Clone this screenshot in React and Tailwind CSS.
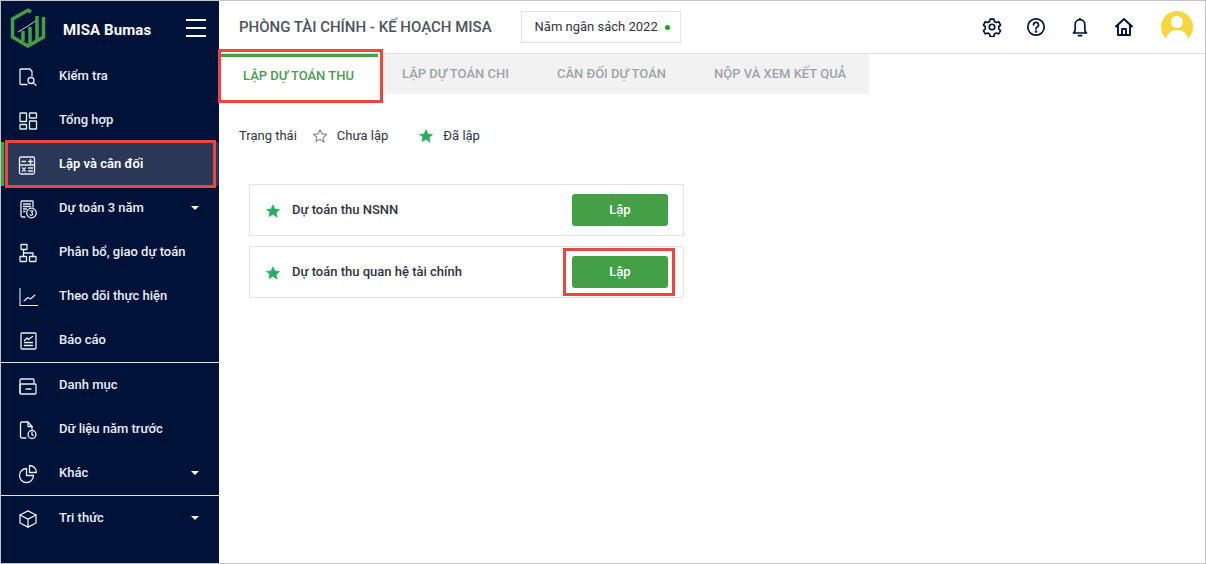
import React from "react";

const S = { fill: "none", stroke: "currentColor", strokeWidth: 1.3, strokeLinecap: "round", strokeLinejoin: "round" };
const Ic = ({ children, size = 20 }) => (
  <svg width={size} height={size} viewBox="0 0 20 20" {...S}>{children}</svg>
);

const icons = {
  check: <Ic><path d="M9 17.500H2.800A.8.8 0 0 1 2 16.700V2.800A.8.8 0 0 1 2.800 2H12l2 2.500V9" /><circle cx="13" cy="13.500" r="3" /><path d="M15.300 15.800l2.700 2.400" /></Ic>,
  grid: <Ic><rect x="2" y="2" width="6.500" height="8.500" rx=".6" /><rect x="11.500" y="2" width="7" height="5" rx=".6" /><rect x="2" y="13.500" width="6.500" height="4.500" rx=".6" /><rect x="11.500" y="10" width="7" height="8" rx=".6" /></Ic>,
  calc: <Ic><rect x="1.500" y="2" width="15" height="17" rx="1.500" /><path d="M1.500 10h15M4 6.500h3.500M10.500 6.500h4M12.500 4.500v4M4.500 12.800l2.800 3.400M7.300 12.800l-2.800 3.400M10.500 13h4M10.500 16h4" /></Ic>,
  three: <Ic><path d="M7 18H4.500A1.500 1.500 0 0 1 3 16.500V2.800A.8.8 0 0 1 3.800 2h10.400a.8.8 0 0 1 .8.8V8" /><path d="M5.500 5h7M5.500 7.500h7M5.500 10h3M5.500 12.500h1.500" strokeWidth="1.300" /><circle cx="13.500" cy="14" r="4.800" /><path d="M12 11.800h3l-1.500 1.800a1.400 1.400 0 1 1-1.500 2" strokeWidth="1.100" /></Ic>,
  tree: <Ic><rect x="3" y="1.500" width="6" height="5" rx=".5" /><rect x="2" y="13.500" width="6.500" height="5" rx=".5" /><rect x="11.500" y="13.500" width="6.500" height="5" rx=".5" /><path d="M5.500 6.500v7M5.500 10H15v3.500" /></Ic>,
  line: <Ic size={20}><path d="M2 1.500V18.500H19.500" strokeWidth="1.100" /><path d="M6 14l4-3.500 2.500 1.500 4.500-4" strokeWidth="1.100" /></Ic>,
  report: <Ic><rect x="3" y="2" width="15" height="16" rx="1" /><path d="M6.500 9.500l2.500-2.500 1.500 1.500L14.500 5.500M6.500 11.500h8M6.500 14.500h8" /></Ic>,
  folder: <Ic><path d="M2 17V4a1 1 0 0 1 1-1h12a1 1 0 0 1 1 1v3" /><path d="M2 9a1 1 0 0 1 1-1h14a1 1 0 0 1 1 1v8a1 1 0 0 1-1 1H3a1 1 0 0 1-1-1z" /><path d="M8 13h5" /></Ic>,
  hist: <Ic><path d="M8 18H4a1.500 1.500 0 0 1-1.500-1.500v-13A1.500 1.500 0 0 1 4 2h6l4 4.500V9" /><path d="M10 2v4.500h4" /><circle cx="14" cy="14.500" r="4" /><path d="M14 12.500v2.200l1.500.8" /></Ic>,
  pie: <Ic><path d="M8.500 4.500a7 7 0 1 0 7 7h-7z" /><path d="M11.500 1.500a7 7 0 0 1 7 7h-7z" /></Ic>,
  box: <Ic><path d="M10 1.800l8 4.200v8l-8 4.200L2 14V6z" /><path d="M2 6l8 4.200L18 6M10 10.200v8" /></Ic>,
};

const Row = ({ icon, label, caret, active }) => (
  <div className={`relative h-11 flex items-center text-[13px] font-medium text-[#e8edf5] ${active ? "bg-[#2b3756]" : ""}`}>
    {active && <div className="absolute left-0 top-0 h-full w-[3px] bg-[#43a047]" />}
    <div className="w-[58px] pl-[17px] pt-[2px] flex items-center">{icons[icon]}</div>
    <span className={active ? "font-semibold text-white" : ""}>{label}</span>
    {caret && <div className="ml-auto mr-[20px] w-0 h-0 border-x-[4px] border-x-transparent border-t-[4px] border-t-white" />}
  </div>
);

const Star = ({ on, className = "" }) => (
  <svg width="16" height="16" viewBox="0 0 24 24" className={className}>
    <path
      d="M12 2.500l2.900 6.400 7 .8-5.200 4.700 1.400 6.900L12 17l-6.100 3.300 1.400-6.900L2.100 9.700l7-.8z"
      fill={on ? "#27ae60" : "none"}
      stroke={on ? "#27ae60" : "#8a8f96"}
      strokeWidth={on ? 1 : 1.800}
      strokeLinejoin="round"
    />
  </svg>
);

const Card = ({ label }) => (
  <div className="h-[52px] border border-[#e2e2e2] flex items-center pl-[15px] pr-[15px] text-[13px] font-medium text-[#30343c]">
    <Star on className="mr-[11px] mt-[2px]" />
    <span>{label}</span>
    <button className="ml-auto w-[96px] h-8 rounded-[3px] bg-[#43a047] text-white text-[13px] font-medium">Lập</button>
  </div>
);

export default function App() {
  return (
    <div className="relative w-[1206px] h-[564px] border border-[#c4c4c4] flex bg-white overflow-hidden font-['Roboto',sans-serif]">
      <aside className="w-[218px] shrink-0 bg-[#001238] flex flex-col">
        <div className="h-[53px] flex items-center pl-[9px] pr-[13px]">
          <svg width="36" height="40" viewBox="0 0 36 40" fill="none">
            <path d="M21 4L18 2.200 2.500 11v18L18 38l15.500-9V9" stroke="#43a047" strokeWidth="3.500" strokeLinejoin="miter" />
            <path d="M8 24l10-6 9-6" stroke="#c9d6c9" strokeWidth="1" />
            <path d="M13 33v-10M20 36V19M27 33V8" stroke="#43a047" strokeWidth="3.500" />
          </svg>
          <span className="ml-[17px] mt-[5px] text-[15px] tracking-[0.1px] font-bold text-white">MISA Bumas</span>
          <div className="ml-auto flex flex-col gap-[6px]">
            <div className="w-5 h-[2px] bg-white" />
            <div className="w-5 h-[2px] bg-white" />
            <div className="w-5 h-[2px] bg-white" />
          </div>
        </div>
        <Row icon="check" label="Kiểm tra" />
        <Row icon="grid" label="Tổng hợp" />
        <Row icon="calc" label="Lập và cân đối" active />
        <Row icon="three" label="Dự toán 3 năm" caret />
        <Row icon="tree" label="Phân bổ, giao dự toán" />
        <Row icon="line" label="Theo dõi thực hiện" />
        <Row icon="report" label="Báo cáo" />
        <div className="h-px bg-[#dfe3ea]" />
        <Row icon="folder" label="Danh mục" />
        <Row icon="hist" label="Dữ liệu năm trước" />
        <Row icon="pie" label="Khác" caret />
        <div className="h-px bg-[#dfe3ea]" />
        <Row icon="box" label="Tri thức" caret />
      </aside>

      <main className="flex-1 flex flex-col min-w-0">
        <header className="h-[53px] shrink-0 border-b border-[#dedede] flex items-center pl-5 pr-[12px]">
          <span className="text-[15px] font-medium text-[#4d5361]">PHÒNG TÀI CHÍNH - KẾ HOẠCH MISA</span>
          <div className="ml-[29px] h-8 w-[160px] border border-[#e2e2e2] flex items-center pl-[13px] text-[13px] text-[#30343c]">
            Năm ngân sách 2022
            <span className="ml-[7px] w-[5px] h-[5px] rounded-full bg-[#1aa51a]" />
          </div>
          <div className="ml-auto flex items-center text-[#001238]">
            <svg width="20" height="20" viewBox="0 0 24 24" fill="none" stroke="currentColor" strokeWidth="2" strokeLinejoin="round">
              <path d="M9.700 2.500h4.600l.6 3 2.200 1.200 2.900-1 2.300 4-2.300 2v2.600l2.300 2-2.300 4-2.900-1-2.200 1.200-.6 3H9.700l-.6-3-2.200-1.200-2.900 1-2.300-4 2.300-2v-2.600l-2.300-2 2.300-4 2.900 1 2.200-1.200z" />
              <circle cx="12" cy="12" r="3.300" />
            </svg>
            <svg className="ml-[24px]" width="20" height="20" viewBox="0 0 20 20" fill="none" stroke="currentColor" strokeWidth="1.700" strokeLinecap="round">
              <circle cx="10" cy="10" r="8.200" />
              <path d="M7.500 7.800a2.500 2.500 0 1 1 3.700 2.200c-.8.500-1.200 1-1.200 1.800" />
              <circle cx="10" cy="14.500" r=".5" fill="currentColor" />
            </svg>
            <svg className="ml-[24px]" width="20" height="20" viewBox="0 0 20 20" fill="none" stroke="currentColor" strokeWidth="1.700" strokeLinejoin="round" strokeLinecap="round">
              <path d="M3.500 16h13c-1.200-1-1.700-2-1.700-3.500V7.500a4.800 4.800 0 0 0-9.600 0v5C5.200 14 4.700 15 3.500 16z" />
              <path d="M8.500 18.700h3M10 1.500v1" />
            </svg>
            <svg className="ml-[24px]" width="20" height="20" viewBox="0 0 20 20" fill="none" stroke="currentColor" strokeWidth="1.900" strokeLinejoin="round">
              <path d="M1.500 10L10 2l8.500 8" />
              <path d="M4 8v10h12V8" />
              <path d="M8 18v-6h4v6" />
            </svg>
            <div className="ml-[27px] relative w-8 h-8 rounded-full bg-[#f6d63e] overflow-hidden">
              <div className="absolute left-[10px] top-[5px] w-3 h-3 rounded-full bg-white" />
              <div className="absolute left-[5px] top-[19px] w-[22px] h-5 rounded-full bg-white" />
            </div>
          </div>
        </header>

        <div className="h-10 w-[650px] bg-[#f2f2f2] flex text-[13px] font-medium text-[#9ea3ab]">
          <div className="w-[159px] bg-white border-t-[3px] border-[#43a047] flex items-center justify-center text-[#4c9a52]">LẬP DỰ TOÁN THU</div>
          <div className="ml-[24px] flex items-center">LẬP DỰ TOÁN CHI</div>
          <div className="ml-[48px] flex items-center">CÂN ĐỐI DỰ TOÁN</div>
          <div className="ml-[48px] flex items-center">NỘP VÀ XEM KẾT QUẢ</div>
        </div>

        <div className="pl-5 pt-[31px] flex items-center text-[13px] text-[#30343c] h-[21px] box-content">
          <span>Trạng thái</span>
          <Star className="ml-[15px] mt-[1px]" />
          <span className="ml-[9px]">Chưa lập</span>
          <Star on className="ml-[30px] mt-[1px]" />
          <span className="ml-[9px]">Đã lập</span>
        </div>

        <div className="ml-[30px] mt-[38px] w-[435px] flex flex-col gap-[10px]">
          <Card label="Dự toán thu NSNN" />
          <Card label="Dự toán thu quan hệ tài chính" />
        </div>
      </main>

      <div className="absolute left-[4px] top-[139px] w-[211px] h-[48px] border-[3px] border-[#e8483f]" />
      <div className="absolute left-[217px] top-[48px] w-[165px] h-[54px] border-[3px] border-[#e8483f]" />
      <div className="absolute left-[562px] top-[247px] w-[112px] h-[48px] border-[3px] border-[#e8483f]" />
    </div>
  );
}
